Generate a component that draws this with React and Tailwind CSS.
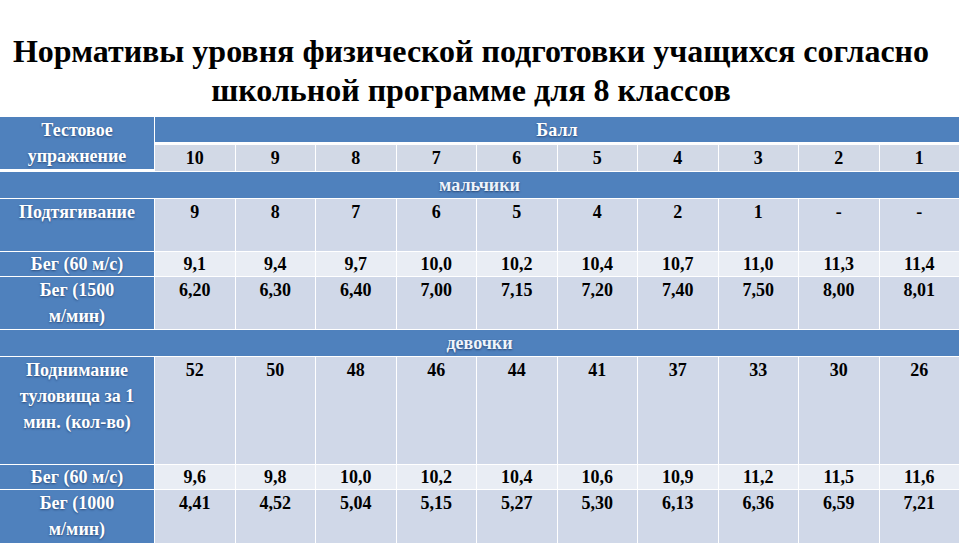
import React from "react";

const scores = ["10", "9", "8", "7", "6", "5", "4", "3", "2", "1"];

const rows = [
  { type: "section", label: "мальчики" },
  { label: ["Подтягивание"], vals: ["9", "8", "7", "6", "5", "4", "2", "1", "-", "-"], tone: "dark" },
  { label: ["Бег (60 м/с)"], vals: ["9,1", "9,4", "9,7", "10,0", "10,2", "10,4", "10,7", "11,0", "11,3", "11,4"], tone: "light" },
  { label: ["Бег (1500", "м/мин)"], vals: ["6,20", "6,30", "6,40", "7,00", "7,15", "7,20", "7,40", "7,50", "8,00", "8,01"], tone: "dark" },
  { type: "section", label: "девочки" },
  { label: ["Поднимание", "туловища за 1", "мин. (кол-во)"], vals: ["52", "50", "48", "46", "44", "41", "37", "33", "30", "26"], tone: "dark" },
  { label: ["Бег (60 м/с)"], vals: ["9,6", "9,8", "10,0", "10,2", "10,4", "10,6", "10,9", "11,2", "11,5", "11,6"], tone: "light" },
  { label: ["Бег (1000", "м/мин)"], vals: ["4,41", "4,52", "5,04", "5,15", "5,27", "5,30", "6,13", "6,36", "6,59", "7,21"], tone: "dark" },
];

export default function App() {
  return (
    <div className="w-[960px] h-[553px] bg-white overflow-hidden font-['Liberation_Serif','Times_New_Roman',serif]">
      <div className="pt-[32px] pr-[18px] text-center text-[32px] leading-[39px] font-bold text-black">
        <div>Нормативы уровня физической подготовки учащихся согласно</div>
        <div>школьной программе для 8 классов</div>
      </div>
      <div className="mt-[7px] w-[959px] bg-white grid grid-cols-[154px_repeat(10,minmax(0,1fr))] grid-rows-[25px_28px_26px_52px_24px_52px_26px_107px_24px_53px] gap-x-px gap-y-px text-[18px] leading-[26px] font-bold">
        <div className="row-span-2 bg-[#4F81BD] border-b-2 border-white flex flex-col items-center justify-center text-white [text-shadow:0_1px_2px_rgba(20,40,80,0.6)]">
          <div>Тестовое</div>
          <div>упражнение</div>
        </div>
        <div className="col-span-10 bg-[#4F81BD] flex items-center justify-center text-white [text-shadow:0_1px_2px_rgba(20,40,80,0.6)]">
          Балл
        </div>
        {scores.map((s) => (
          <div key={s} className="bg-[#D2D9E6] border-t-2 border-white flex items-center justify-center text-black">
            {s}
          </div>
        ))}
        {rows.map((r, i) =>
          r.type === "section" ? (
            <div
              key={i}
              className="col-span-11 bg-[#4F81BD] flex items-center justify-center text-[#eef4fb] [text-shadow:0_1px_2px_rgba(20,40,80,0.7)]"
            >
              {r.label}
            </div>
          ) : (
            <React.Fragment key={i}>
              <div
                className={`bg-[#4F81BD] text-white text-center [text-shadow:0_1px_2px_rgba(20,40,80,0.6)] ${
                  r.tone === "light" ? "flex items-center justify-center" : ""
                }`}
              >
                {r.label.map((l, j) => (
                  <div key={j}>{l}</div>
                ))}
              </div>
              {r.vals.map((v, j) => (
                <div
                  key={j}
                  className={`${r.tone === "light" ? "bg-[#E9EDF4] flex items-center justify-center" : "bg-[#D0D8E8]"} text-center text-black`}
                >
                  {v}
                </div>
              ))}
            </React.Fragment>
          )
        )}
      </div>
    </div>
  );
}
